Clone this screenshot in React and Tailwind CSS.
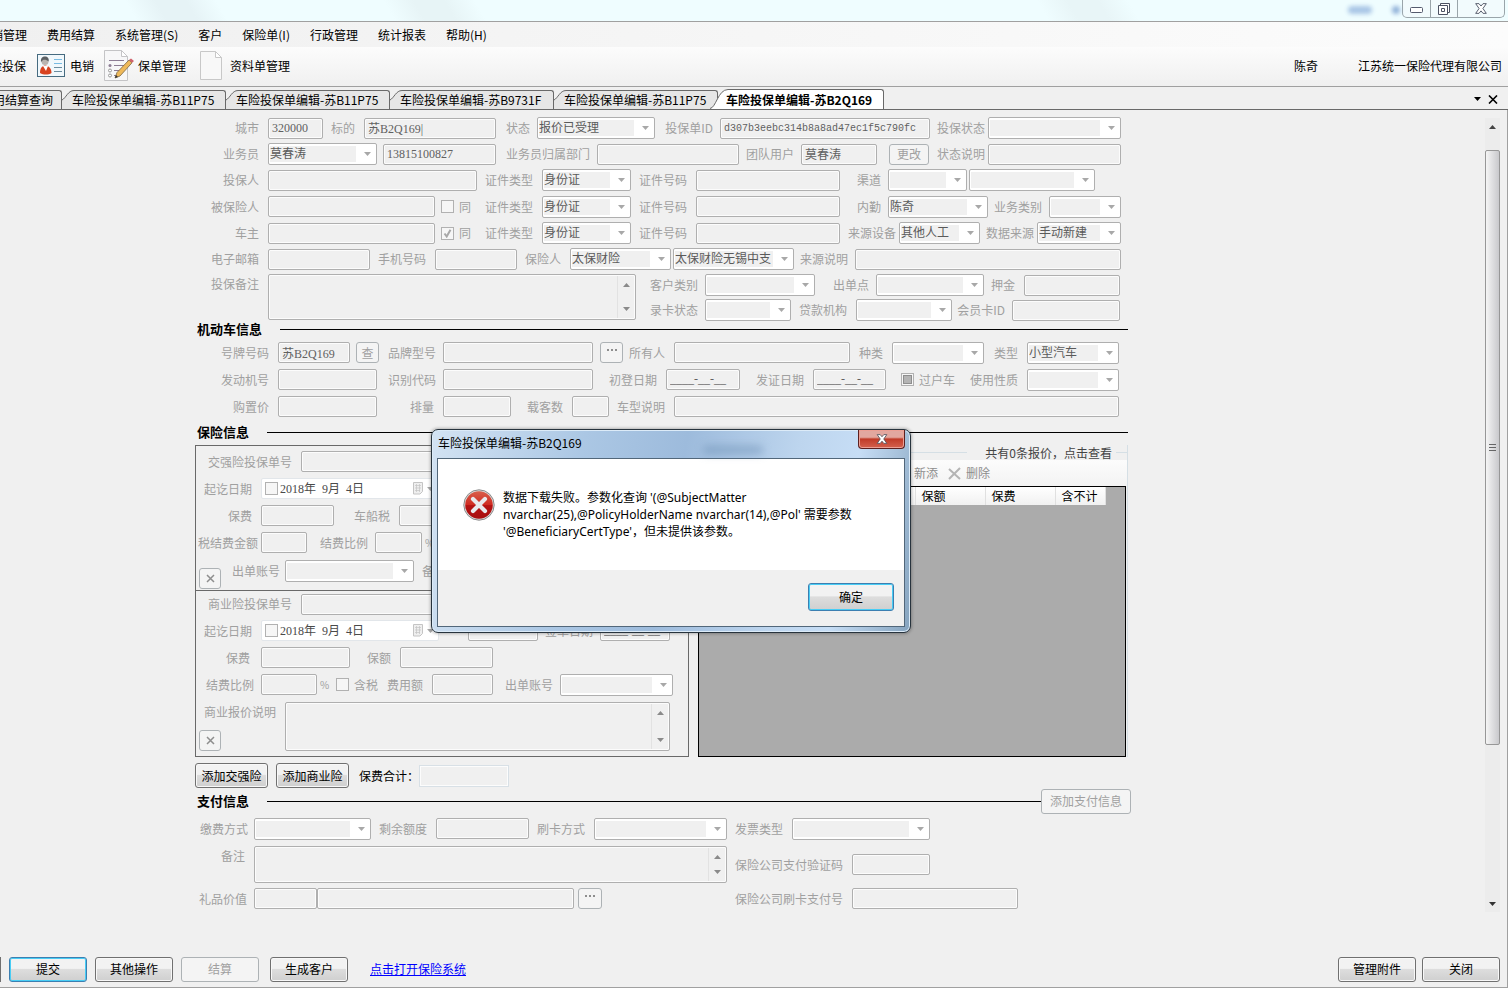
import { clsx } from 'clsx';

const LABEL = 'shrink-0 whitespace-nowrap text-right text-[#a0a0a0]';
const BOX =
  'block h-[21px] rounded-[2px] border border-[#afafaf] bg-[#f0f0f0] px-[3px] text-[#606060] shadow-[inset_0_0_0_1px_#fcfcfc]';

const Row = ({ className = 'h-[26px]', children }) => (
  <div className={clsx('flex items-center', className)}>{children}</div>
);

const Text = ({ label, lw, w, value = '', pr = 'pr-[9px]', mono, aria }) => (
  <label className="flex shrink-0 items-center">
    {label && <span className={clsx(LABEL, lw, pr)}>{label}</span>}
    <input
      type="text"
      disabled
      defaultValue={value}
      aria-label={aria}
      className={clsx(
        BOX,
        w,
        mono ? "font-['Liberation_Mono',monospace] text-[10px]" : "font-['Liberation_Serif','Noto_Sans_CJK_SC',serif] text-xs",
      )}
    />
  </label>
);

const Arrow = ({ up, className = 'fill-[#a8a8a8]' }) => (
  <svg viewBox="0 0 7 4" className={clsx('h-1 w-[7px] shrink-0', className)}>
    <path d={up ? 'M0 4h7L3.5 0z' : 'M0 0h7L3.5 4z'} />
  </svg>
);

const Pick = ({ label, lw, w, value = '', pr = 'pr-[9px]', aria }) => (
  <label className="flex shrink-0 items-center">
    {label && <span className={clsx(LABEL, lw, pr)}>{label}</span>}
    <span className={clsx('flex h-[22px] items-center rounded-[2px] border border-[#afafaf] bg-white py-[2px] pl-px pr-[5px]', w)}>
      <select
        disabled
        aria-label={aria}
        className="mr-2 h-4 min-w-0 flex-1 appearance-none bg-[#f0f0f0] p-0 pb-[2px] text-xs leading-[14px] text-[#5a5a5a] opacity-100"
      >
        <option>{value}</option>
      </select>
      <Arrow />
    </span>
  </label>
);

const Area = ({ label, lw, w, h, pr = 'pr-[9px]' }) => (
  <label className="flex shrink-0">
    <span className={clsx(LABEL, lw, pr, 'pt-[2px]')}>{label}</span>
    <span className={clsx('flex rounded-[2px] border border-[#afafaf] bg-[#f0f0f0] p-px shadow-[inset_0_0_0_1px_#fcfcfc]', w, h)}>
      <textarea disabled className="min-w-0 flex-1 resize-none" />
      <span className="flex w-[17px] flex-col items-center justify-between border-l border-[#e2e2e2] py-[7px]">
        <Arrow up className="fill-[#8a8a8a]" />
        <Arrow className="fill-[#8a8a8a]" />
      </span>
    </span>
  </label>
);

const Check = ({ label, checked, mixed, className }) => (
  <label className={clsx('flex shrink-0 items-center gap-[5px] text-[#a0a0a0]', className)}>
    <span className="grid size-[13px] place-items-center border border-[#b1b1b1] bg-[#f6f6f6]">
      <input type="checkbox" disabled defaultChecked={checked} className="col-start-1 row-start-1 size-full appearance-none" />
      {checked && (
        <svg viewBox="0 0 9 9" className="col-start-1 row-start-1 size-[9px] fill-none stroke-[#a8a8a8] stroke-2">
          <path d="M1.5 4.5 3.7 7.5 7.5.8" />
        </svg>
      )}
      {mixed && <span className="col-start-1 row-start-1 size-[9px] border border-[#8e8e8e] bg-[#b4b4b4]" />}
    </span>
    {label}
  </label>
);

const SmallButton = ({ className, children }) => (
  <button
    type="button"
    disabled
    className={clsx('flex h-[21px] shrink-0 items-center justify-center rounded-[3px] border border-[#adb2b5] bg-[#f4f4f4] text-[#a0a0a0]', className)}
  >
    {children}
  </button>
);

const CrossButton = ({ className, name }) => (
  <SmallButton className={clsx('w-[22px]', className)}>
    <svg viewBox="0 0 9 9" className="size-[9px] fill-none stroke-[#8e8e8e] stroke-[1.5]" role="img" aria-label={name}>
      <path d="M1 1l7 7M8 1 1 8" />
    </svg>
  </SmallButton>
);

const Dots = () => (
  <svg viewBox="0 0 12 3" className="mb-1 h-[3px] w-3 fill-[#8e8e8e]">
    <path d="M1 0h2v2H1zM5 0h2v2H5zM9 0h2v2H9z" />
  </svg>
);

const PushButton = ({ className = 'w-[78px]', focus, disabled, children }) => (
  <button
    type="button"
    disabled={disabled}
    className={clsx(
      'shrink-0 whitespace-nowrap rounded-[3px] border text-xs',
      !className.includes('h-[28px]') && 'h-[25px]',
      disabled && 'border-[#adb2b5] bg-[#f4f4f4] text-[#a0a0a0]',
      !disabled && 'bg-linear-to-b from-[#f2f2f2] from-45% via-[#dddddd] via-50% to-[#cfcfcf] text-black',
      focus && 'border-[#3c7fb1] shadow-[inset_0_0_0_1px_#48cdf5]',
      !focus && !disabled && 'border-[#707070] shadow-[inset_0_0_0_1px_#f8f8f8]',
      className,
    )}
  >
    {children}
  </button>
);

const DatePick = ({ label }) => (
  <label className="flex shrink-0 items-center">
    <span className={clsx(LABEL, 'w-[65px] pr-[9px]')}>{label}</span>
    <span className="flex h-[21px] w-[178px] items-center rounded-[2px] border border-[#e2e6ea] bg-white pl-[3px] pr-1">
      <span className="size-[13px] shrink-0 border border-[#b1b1b1] bg-[#f6f6f6]" />
      <input
        type="text"
        disabled
        defaultValue="2018年  9月  4日"
        className="ml-[2px] min-w-0 flex-1 text-xs text-[#4a4a4a] font-['Liberation_Serif','Noto_Sans_CJK_SC',serif]"
      />
      <svg viewBox="0 0 12 13" className="mr-[3px] h-[13px] w-3 shrink-0 fill-[#efefef] stroke-[#c4c4c4]">
        <path d="M1.5.5h9v9l-2.500 2.500h-6.500z" />
        <path d="M3 3.500h6M3 6h6M3 8.500h5M4.500 2v8M7.500 2v8" strokeWidth=".7" />
      </svg>
      <Arrow />
    </span>
  </label>
);

const SectionTitle = ({ className, children, after }) => (
  <div className={clsx('flex items-center pl-[2px]', className)}>
    <h2 className="mr-[18px] shrink-0 text-[13px] font-bold leading-4 text-black">{children}</h2>
    <span className="h-px flex-1 bg-black" />
    {after}
  </div>
);

const menus = ['营销管理', '费用结算', '系统管理(S)', '客户', '保险单(I)', '行政管理', '统计报表', '帮助(H)'];
const tabs = ['车险投保单编辑-苏B11P75', '车险投保单编辑-苏B11P75', '车险投保单编辑-苏B9731F', '车险投保单编辑-苏B11P75'];

const TitleBar = () => (
  <header className="flex h-[22px] justify-end border-b border-[#a0a0a0] bg-[linear-gradient(60deg,#effdff_0_9%,#e6f3f6_11%_13%,#effdff_15%_26%,#e7f4f6_28%_30%,#effdff_32%_69%,#e8f5f7_71%_73%,#effdff_75%)]">
    <span className="mr-5 mt-[6px] h-2 w-6 rounded-full bg-[#a9c6e6] blur-[2px]" />
    <span className="mr-[2px] mt-[6px] h-2 w-2 rounded-full bg-[#8fb0d8] blur-[2px]" />
    <div className="mr-[3px] flex h-[18px] rounded-b-[5px] border border-t-0 border-[#9aa5aa] bg-[#f2fbfd]">
      <button type="button" aria-label="最小化" className="grid w-[28px] place-items-center border-r border-[#9aa5aa]">
        <svg viewBox="0 0 13 6" className="mt-[3px] h-[6px] w-[13px] fill-white stroke-[#555b6e]">
          <rect x=".5" y=".5" width="12" height="5" rx="1" />
        </svg>
      </button>
      <button type="button" aria-label="还原" className="grid w-[27px] place-items-center border-r border-[#9aa5aa]">
        <svg viewBox="0 0 12 12" className="size-3 fill-white stroke-[#4c5263]">
          <path d="M2.500.5h9v9h-9z" />
          <path d="M.5 2.500h9v9h-9zM3.500 5.500h3v3h-3z" />
        </svg>
      </button>
      <button type="button" aria-label="关闭窗口" className="grid w-[46px] place-items-center">
        <svg viewBox="0 0 13 12" className="h-[11px] w-3 fill-white stroke-[#4c5263]">
          <path d="M.7.7h3.600l2.200 2.600L8.700.7h3.600L8.600 6l3.700 5.300H8.700L6.500 8.600l-2.200 2.700H.7L4.400 6z" />
        </svg>
      </button>
    </div>
  </header>
);

const ToolBar = () => (
  <div className="flex h-10 items-center overflow-hidden whitespace-nowrap border-b border-[#a0a0a0] bg-linear-to-b from-[#fcfcfc] to-[#f0f0f0] pb-[2px]">
    <button type="button" className="-ml-[22px]">车险投保</button>
    <button type="button" className="ml-[11px] flex items-center gap-[5px]">
      <svg viewBox="0 0 28 23" className="h-[23px] w-7">
        <rect x=".5" y=".5" width="27" height="22" fill="#f1f8fc" stroke="#466b80" />
        <path d="M3 19c0-5 2-7 5-7.500 4 .3 6.500 3 6.500 7.500-3 2-8 2-11.500 0z" fill="#d8421f" />
        <path d="M6 12l3 5 2-5z" fill="#fff" />
        <circle cx="8" cy="7.500" r="3.500" fill="#b9b4b0" />
        <path d="M4 8c-.5-4 1.500-5.500 4-5.500s4.500 2 3.500 5C10 5.500 7 5.500 6 6z" fill="#5c6064" />
        <path d="M17 5.500h8M17 9.500h8" stroke="#79bbe2" />
        <path d="M17 13.500h8M17 17.500h8" stroke="#6b8da0" />
      </svg>
      电销
    </button>
    <button type="button" className="ml-[9px] flex items-center gap-[3px]">
      <svg viewBox="0 0 32 32" className="size-8">
        <path d="M1.500.5h17l6 6v24h-23z" fill="#f7f7f8" stroke="#c4c4c6" />
        <path d="M18.500.5v6h6z" fill="#fff" stroke="#c4c4c6" />
        <path d="M6 10.500h15M11 15.500h10M11 20.500h8M11 25.500h6" stroke="#8d7d94" />
        <circle cx="7" cy="15.500" r="1.500" fill="#8d7d94" />
        <circle cx="7" cy="20.500" r="1.500" fill="#fff" stroke="#999" />
        <circle cx="7" cy="25.500" r="1.500" fill="#fff" stroke="#999" />
        <path d="M12 28l2-5.500L26 10l3 2.800L17 26z" fill="#efb95a" stroke="#7a6440" strokeWidth=".8" />
        <path d="M26 10l2-1.500 3 2.500-2 1.800z" fill="#d0626c" />
        <path d="M12 28l1-3 2 2z" fill="#333" />
      </svg>
      保单管理
    </button>
    <button type="button" className="ml-[14px] flex items-center gap-2">
      <svg viewBox="0 0 22 29" className="h-[29px] w-[22px]">
        <path d="M.5.5h15l6 6v22H.5z" fill="#f8f8f8" stroke="#c8c8c8" />
        <path d="M15.500.5v6h6z" fill="#fff" stroke="#c8c8c8" />
      </svg>
      资料单管理
    </button>
    <span className="ml-auto">陈奇</span>
    <span className="ml-10 mr-[6px]">江苏统一保险代理有限公司</span>
  </div>
);

const Tab = ({ active, children }) => (
  <button type="button" className={clsx('flex shrink-0', active ? '-ml-2 h-5 w-[174px] font-bold' : 'h-[19px] w-[164px]')}>
    {active ? (
      <svg viewBox="0 0 18 20" className="h-5 w-[18px] shrink-0">
        <path d="M0 20C6 19 8 0 18 0v20z" fill="#fff" />
        <path d="M0 19.500C6 19 8 .5 18 .5" fill="none" stroke="#696969" />
      </svg>
    ) : (
      <svg viewBox="0 0 12 19" className="h-[19px] w-3 shrink-0">
        <path d="M0 10C4 8 6 0 12 0v19H0z" fill="#e6e6e6" />
        <path d="M0 10C4 8 6 .5 12 .5" fill="none" stroke="#696969" />
      </svg>
    )}
    <span
      className={clsx(
        'flex h-full flex-1 items-center whitespace-nowrap rounded-tr-[3px] border-r border-t border-[#696969]',
        active ? 'bg-white' : 'bg-[#e6e6e6]',
      )}
    >
      <span className="-ml-[2px]">{children}</span>
    </span>
  </button>
);

const TabStrip = () => (
  <div className="flex h-[23px] items-end overflow-hidden border-b border-[#696969] bg-[#f0f0f0]">
    <button type="button" className="-ml-5 flex h-[19px] w-[82px] shrink-0 items-center justify-end whitespace-nowrap rounded-tr-[3px] border-r border-t border-[#696969] bg-[#e6e6e6] pr-2">
      费用结算查询
    </button>
    {tabs.map((t, i) => (
      <Tab key={i}>{t}</Tab>
    ))}
    <Tab active>车险投保单编辑-苏B2Q169</Tab>
    <div className="ml-auto mr-[10px] flex h-5 items-center gap-[7px]">
      <Arrow className="fill-black" />
      <button type="button" aria-label="关闭标签">
        <svg viewBox="0 0 10 9" className="h-[9px] w-[10px] fill-none stroke-black stroke-[1.6]">
          <path d="M1 .5l8 8M9 .5l-8 8" />
        </svg>
      </button>
    </div>
  </div>
);

const PolicyFields = () => (
  <section>
    <Row>
      <Text label="城市" lw="w-[73px]" w="w-[55px]" value="320000" />
      <Text label="标的" lw="w-[41px]" w="w-[132px]" value="苏B2Q169|" />
      <Pick label="状态" lw="w-[41px]" w="w-[118px]" pr="pr-[7px]" value="报价已受理" />
      <Text label="投保单ID" lw="w-[65px]" w="w-[210px]" pr="pr-[7px]" value="d307b3eebc314b8a8ad47ec1f5c790fc" mono />
      <Pick label="投保状态" lw="w-[58px]" w="w-[133px]" pr="pr-[3px]" />
    </Row>
    <Row>
      <Pick label="业务员" lw="w-[73px]" w="w-[109px]" value="莫春涛" />
      <span className="w-[6px]" />
      <Text w="w-[113px]" value="13815100827" aria="业务员" />
      <Text label="业务员归属部门" lw="w-[101px]" w="w-[142px]" pr="pr-[7px]" />
      <Text label="团队用户" lw="w-[62px]" w="w-[76px]" pr="pr-[7px]" value="莫春涛" />
      <SmallButton className="ml-3 w-10">更改</SmallButton>
      <Text label="状态说明" lw="w-[59px]" w="w-[133px]" pr="pr-[3px]" />
    </Row>
    <Row>
      <Text label="投保人" lw="w-[73px]" w="w-[209px]" />
      <Pick label="证件类型" lw="w-[65px]" w="w-[89px]" value="身份证" />
      <Text label="证件号码" lw="w-[65px]" w="w-[144px]" />
      <Pick label="渠道" lw="w-[48px]" w="w-[79px]" pr="pr-[7px]" />
      <span className="w-[2px]" />
      <Pick w="w-[126px]" aria="渠道" />
    </Row>
    <Row className="h-[27px]">
      <Text label="被保险人" lw="w-[73px]" w="w-[167px]" />
      <Check label="同" className="ml-[6px]" />
      <Pick label="证件类型" lw="w-[71px]" w="w-[89px]" value="身份证" />
      <Text label="证件号码" lw="w-[65px]" w="w-[144px]" />
      <Pick label="内勤" lw="w-[48px]" w="w-[100px]" pr="pr-[7px]" value="陈奇" />
      <Pick label="业务类别" lw="w-[61px]" w="w-[72px]" pr="pr-[7px]" />
    </Row>
    <Row>
      <Text label="车主" lw="w-[73px]" w="w-[167px]" />
      <Check label="同" className="ml-[6px]" checked />
      <Pick label="证件类型" lw="w-[71px]" w="w-[89px]" value="身份证" />
      <Text label="证件号码" lw="w-[65px]" w="w-[144px]" />
      <Pick label="来源设备" lw="w-[59px]" w="w-[81px]" pr="pr-[3px]" value="其他人工" />
      <Pick label="数据来源" lw="w-[57px]" w="w-[84px]" pr="pr-[3px]" value="手动新建" />
    </Row>
    <Row>
      <Text label="电子邮箱" lw="w-[73px]" w="w-[102px]" />
      <Text label="手机号码" lw="w-[65px]" w="w-[82px]" />
      <Pick label="保险人" lw="w-[53px]" w="w-[101px]" value="太保财险" />
      <span className="w-[2px]" />
      <Pick w="w-[121px]" value="太保财险无锡中支" aria="保险人" />
      <Text label="来源说明" lw="w-[61px]" w="w-[266px]" pr="pr-[7px]" />
    </Row>
    <div className="flex pt-[2px]">
      <Area label="投保备注" lw="w-[73px]" w="w-[368px]" h="h-[46px]" />
      <div>
        <Row className="h-[22px]">
          <Pick label="客户类别" lw="w-[69px]" w="w-[110px]" pr="pr-[7px]" />
          <Pick label="出单点" lw="w-[61px]" w="w-[108px]" pr="pr-[7px]" />
          <Text label="押金" lw="w-[40px]" w="w-[96px]" />
        </Row>
        <Row className="mt-[3px] h-[22px]">
          <Pick label="录卡状态" lw="w-[69px]" w="w-[86px]" pr="pr-[7px]" />
          <Pick label="贷款机构" lw="w-[65px]" w="w-[96px]" />
          <Text label="会员卡ID" lw="w-[60px]" w="w-[108px]" pr="pr-[7px]" />
        </Row>
      </div>
    </div>
  </section>
);

const VehicleFields = () => (
  <section className="pt-[2px]">
    <Row className="h-[27px]">
      <Text label="号牌号码" lw="w-[83px]" w="w-[72px]" value="苏B2Q169" />
      <SmallButton className="ml-[6px] w-[23px]">查</SmallButton>
      <Text label="品牌型号" lw="w-[64px]" w="w-[150px]" pr="pr-[7px]" />
      <SmallButton className="ml-[7px] w-[23px]"><Dots /></SmallButton>
      <Text label="所有人" lw="w-[51px]" w="w-[176px]" />
      <Pick label="种类" lw="w-[42px]" w="w-[92px]" />
      <Pick label="类型" lw="w-[43px]" w="w-[92px]" value="小型汽车" />
    </Row>
    <Row className="h-[27px]">
      <Text label="发动机号" lw="w-[83px]" w="w-[99px]" />
      <Text label="识别代码" lw="w-[66px]" w="w-[150px]" pr="pr-[7px]" />
      <Text label="初登日期" lw="w-[73px]" w="w-[74px]" value="____-__-__" />
      <Text label="发证日期" lw="w-[73px]" w="w-[73px]" value="____-__-__" />
      <Check label="过户车" mixed className="ml-[15px]" />
      <Pick label="使用性质" lw="w-[72px]" w="w-[92px]" />
    </Row>
    <Row className="h-[27px]">
      <Text label="购置价" lw="w-[83px]" w="w-[99px]" />
      <Text label="排量" lw="w-[66px]" w="w-[68px]" />
      <Text label="载客数" lw="w-[61px]" w="w-[37px]" />
      <Text label="车型说明" lw="w-[65px]" w="w-[445px]" />
    </Row>
  </section>
);

const InsuranceBoxes = () => (
  <div className="w-[494px] shrink-0 border border-[#696969]">
    <div className="h-[145px] border-b border-[#696969] pt-[2px]">
      <Row className="h-[27px]"><Text label="交强险投保单号" lw="w-[105px]" w="w-[220px]" /></Row>
      <Row className="h-[27px]"><DatePick label="起讫日期" /></Row>
      <Row className="h-[27px]">
        <Text label="保费" lw="w-[65px]" w="w-[73px]" />
        <Text label="车船税" lw="w-[65px]" w="w-[93px]" />
      </Row>
      <Row className="h-[27px]">
        <Text label="税结费金额" lw="w-[65px]" w="w-[46px]" pr="pr-[3px]" />
        <Text label="结费比例" lw="w-[68px]" w="w-[47px]" pr="pr-[7px]" />
        <span className="ml-[3px] text-[10px] text-[#a0a0a0]">%</span>
      </Row>
      <div className="flex items-start pt-1">
        <CrossButton name="移除交强险" className="ml-[3px] mt-2" />
        <Pick label="出单账号" lw="w-[64px]" w="w-[129px]" pr="pr-[5px]" />
        <Text label="备注" lw="w-[35px]" w="w-[180px]" pr="pr-[3px]" />
      </div>
    </div>
    <div className="pb-[5px]">
      <Row className="h-[26px]"><Text label="商业险投保单号" lw="w-[105px]" w="w-[220px]" /></Row>
      <Row className="h-[27px]">
        <DatePick label="起讫日期" />
        <span className="w-[29px]" />
        <Text w="w-[70px]" aria="起讫日期" />
        <Text label="签单日期" lw="w-[62px]" w="w-[70px]" pr="pr-[7px]" value="____-__-__" />
      </Row>
      <Row className="h-[27px]">
        <Text label="保费" lw="w-[65px]" w="w-[89px]" pr="pr-[11px]" />
        <Text label="保额" lw="w-[50px]" w="w-[93px]" />
      </Row>
      <Row className="h-[27px]">
        <Text label="结费比例" lw="w-[65px]" w="w-[56px]" pr="pr-[7px]" />
        <span className="w-[19px] pl-[3px] text-[10px] text-[#a0a0a0]">%</span>
        <Check label="含税" />
        <Text label="费用额" lw="w-[54px]" w="w-[61px]" />
        <Pick label="出单账号" lw="w-[67px]" w="w-[113px]" pr="pr-[7px]" />
      </Row>
      <div className="grid w-fit pt-1">
        <div className="col-start-1 row-start-1">
          <Area label="商业报价说明" lw="w-[89px]" w="w-[385px]" h="h-[49px]" />
        </div>
        <CrossButton name="移除商业险" className="col-start-1 row-start-1 ml-[3px] self-end" />
      </div>
    </div>
  </div>
);

const QuoteGroup = () => (
  <div className="ml-[9px] flex flex-1 flex-col border-r border-[#d5dfe5]">
    <div className="flex h-[15px] items-center">
      <span className="h-px flex-1 bg-[#d5dfe5]" />
      <a href="#quotes" className="ml-[18px] mr-1 whitespace-nowrap text-[#444]">共有0条报价，点击查看</a>
      <span className="h-px w-[11px] bg-[#d5dfe5]" />
    </div>
    <div className="flex h-[26px] items-center bg-linear-to-b from-[#fcfcfc] to-[#f3f3f3] pl-[216px] text-[#8d8d8d]">
      <button type="button" disabled>新添</button>
      <button type="button" disabled className="ml-[10px] flex items-center gap-[5px]">
        <svg viewBox="0 0 13 13" className="size-[13px] fill-none stroke-[#b4b4b4] stroke-2">
          <path d="M1 2l11 10M12 1 1 12" />
        </svg>
        删除
      </button>
    </div>
    <div id="quotes" className="mr-px flex-1 border border-black bg-[#ababab]">
      <table className="border-collapse">
        <thead>
          <tr className="h-[18px] bg-linear-to-b from-white to-[#f1f1f1] text-left text-black [&_th]:border-r [&_th]:border-[#e0e0e0] [&_th]:p-0 [&_th]:pl-[6px] [&_th]:font-normal">
            <th className="w-[216px]" />
            <th className="w-[70px]">保额</th>
            <th className="w-[70px]">保费</th>
            <th className="w-[50px]">含不计</th>
          </tr>
        </thead>
      </table>
    </div>
  </div>
);

const PaymentFields = () => (
  <section className="pt-px">
    <Row className="h-[27px]">
      <Pick label="缴费方式" lw="w-[59px]" w="w-[117px]" pr="pr-[6px]" />
      <Text label="剩余额度" lw="w-[65px]" w="w-[93px]" />
      <Pick label="刷卡方式" lw="w-[65px]" w="w-[133px]" />
      <Pick label="发票类型" lw="w-[65px]" w="w-[138px]" />
    </Row>
    <div className="flex items-center pt-1">
      <Area label="备注" lw="w-[59px]" w="w-[473px]" h="h-[37px]" />
      <Text label="保险公司支付验证码" lw="w-[125px]" w="w-[78px]" />
    </div>
    <Row className="mt-[2px] h-[27px]">
      <Text label="礼品价值" lw="w-[59px]" w="w-[63px]" pr="pr-[7px]" />
      <Text w="w-[257px]" aria="礼品价值" />
      <SmallButton className="ml-1 w-6"><Dots /></SmallButton>
      <Text label="保险公司刷卡支付号" lw="w-[250px]" w="w-[166px]" />
    </Row>
  </section>
);

const ErrorDialog = () => (
  <div
    role="alertdialog"
    aria-labelledby="dlg-title"
    className="absolute left-[431px] top-[429px] w-[480px] rounded-[7px] border border-[#27333d] bg-[linear-gradient(100deg,#d3e3f3_0%,#abc7e4_30%,#9dbbdc_50%,#bdd5ee_72%,#c6ddf5_84%,#86a4bf_100%)] px-[5px] pb-[5px] shadow-[inset_0_0_0_1px_#dcebf8,0_0_3px_1px_rgba(0,0,0,.25)]"
  >
    <div className="flex h-[28px] items-start justify-between">
      <h3 id="dlg-title" className="pl-px pt-1 leading-[17px] text-black">车险投保单编辑-苏B2Q169</h3>
      <span className="ml-auto mr-[95px] mt-4 h-2 w-[60px] rounded-full bg-[#6689b0]/50 blur-[4px]" />
      <button
        type="button"
        aria-label="关闭提示"
        className="grid h-[19px] w-[47px] place-items-center rounded-b-[4px] border border-t-0 border-[#5b2020] bg-linear-to-b from-[#e2a79f] from-40% via-[#c03a28] via-50% to-[#d4614e] shadow-[inset_0_0_0_1px_#ec9f94]"
      >
        <svg viewBox="0 0 13 12" className="h-[10px] w-3 fill-white stroke-[#53525c]">
          <path d="M.7.7h3.600l2.200 2.600L8.700.7h3.600L8.600 6l3.700 5.300H8.700L6.500 8.600l-2.200 2.700H.7L4.400 6z" />
        </svg>
      </button>
    </div>
    <div className="border border-[#52677a]">
      <div className="flex h-[111px] gap-2 bg-white pl-[25px] pt-[30px]">
        <svg viewBox="0 0 32 32" className="size-8 shrink-0">
          <defs>
            <linearGradient id="err" x1="0" y1="0" x2="0" y2="1">
              <stop offset="0" stopColor="#d9604c" />
              <stop offset=".5" stopColor="#cf2a20" />
              <stop offset=".52" stopColor="#b51212" />
              <stop offset="1" stopColor="#a80f10" />
            </linearGradient>
          </defs>
          <circle cx="16" cy="16" r="15.200" fill="#dcdcdc" stroke="#8a8a8a" />
          <circle cx="16" cy="16" r="13.800" fill="url(#err)" />
          <path d="M10 10l12 12M22 10 10 22" stroke="#e9e9ec" strokeWidth="4.200" strokeLinecap="round" />
        </svg>
        <p className="whitespace-nowrap leading-[17px] text-black font-['Noto_Sans','Noto_Sans_CJK_SC',sans-serif]">
          数据下载失败。参数化查询 '(@SubjectMatter
          <br />
          nvarchar(25),@PolicyHolderName nvarchar(14),@Pol' 需要参数
          <br />
          '@BeneficiaryCertType'，但未提供该参数。
        </p>
      </div>
      <div className="flex h-[56px] items-center justify-end bg-[#f0f0f0] pb-[2px] pr-[10px]">
        <PushButton focus className="h-[28px] w-[86px]">确定</PushButton>
      </div>
    </div>
  </div>
);

const App = () => (
  <div className="relative flex min-h-screen flex-col overflow-hidden bg-[#f0f0f0] text-xs leading-4 text-black font-['Noto_Sans_CJK_SC',sans-serif]">
    <TitleBar />
    <nav className="flex h-[25px] items-center gap-5 overflow-hidden whitespace-nowrap bg-linear-to-r from-[#f0f0f0] to-[#fcfcfc]">
      {menus.map((m, i) => (
        <button type="button" key={m} className={clsx(i === 0 && '-ml-[21px]')}>{m}</button>
      ))}
    </nav>
    <ToolBar />
    <TabStrip />

    <div className="flex flex-1 flex-col border-b border-r border-[#a0a0a0]">
      <div className="flex flex-1 justify-between">
        <main className="w-[1131px] shrink-0 pl-[195px] pt-[5px]">
          <PolicyFields />
          <SectionTitle className="mr-[3px] h-4">机动车信息</SectionTitle>
          <VehicleFields />
          <SectionTitle className="mr-[3px] mt-[3px] h-[18px]">保险信息</SectionTitle>
          <div className="mr-[3px] mt-1 flex">
            <InsuranceBoxes />
            <QuoteGroup />
          </div>
          <div className="mt-[6px] flex items-center">
            <PushButton className="w-[73px]">添加交强险</PushButton>
            <PushButton className="ml-2 w-[73px]">添加商业险</PushButton>
            <label className="ml-[10px] flex items-center text-black">
              <span className="w-[60px]">保费合计：</span>
              <input type="text" readOnly className="h-[22px] w-[90px] border border-[#d8e0e6] bg-[#f0f0f0] shadow-[inset_0_0_0_1px_#fcfcfc]" />
            </label>
          </div>
          <SectionTitle className="h-[26px]" after={<PushButton disabled className="w-[90px]">添加支付信息</PushButton>}>
            支付信息
          </SectionTitle>
          <PaymentFields />
        </main>
        <div className="mr-[7px] mt-2 mb-[31px] flex w-[15px] flex-col items-center bg-[#ececec] pb-[6px] pt-[7px]">
          <Arrow up className="fill-[#444]" />
          <span className="mt-[21px] flex min-h-[595px] w-[15px] flex-col items-center justify-center gap-px rounded-[2px] border border-[#979797] bg-linear-to-r from-[#f5f5f5] to-[#c9c9cc]">
            <span className="h-px w-[7px] bg-[#666]" />
            <span className="mt-px h-px w-[7px] bg-[#666]" />
            <span className="mt-px h-px w-[7px] bg-[#666]" />
          </span>
          <Arrow className="mt-auto fill-[#333]" />
        </div>
      </div>
      <footer className="flex h-[44px] items-center gap-2 pr-[7px] pt-2">
        <span className="h-[25px] w-px bg-[#707070]" />
        <PushButton focus>提交</PushButton>
        <PushButton>其他操作</PushButton>
        <PushButton disabled>结算</PushButton>
        <PushButton className="ml-[3px] w-[78px]">生成客户</PushButton>
        <a href="#system" className="ml-[14px] text-[#0000ff] underline">点击打开保险系统</a>
        <div className="ml-auto flex gap-[6px]">
          <PushButton>管理附件</PushButton>
          <PushButton>关闭</PushButton>
        </div>
      </footer>
    </div>

    <ErrorDialog />
  </div>
);

export default App;
